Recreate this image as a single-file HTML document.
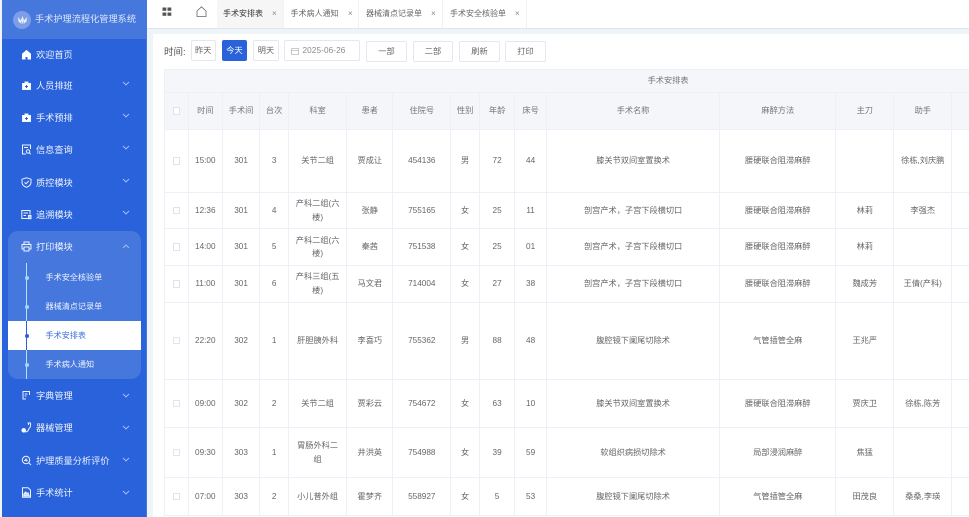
<!DOCTYPE html>
<html lang="zh"><head><meta charset="utf-8"><style>
*{box-sizing:border-box}
html,body{margin:0;padding:0;width:969px;height:517px;overflow:hidden;background:#eef5f9;font-family:"Liberation Sans","Noto Sans CJK SC",sans-serif}
body{filter:blur(.3px)}
.a{position:absolute}
#side{left:2px;top:0;width:145px;height:517px;background:#2962da;border-right:1px solid #4577dc}
#head{left:2px;top:0;width:144px;height:39px;background:#4577dc}
.logo{left:13px;top:11px;width:18px;height:18px;border-radius:50%;background:#7b9ee6}
.ttl{left:35px;top:13px;font-size:9.2px;line-height:13px;color:#dfe7f8;white-space:nowrap}
.grp{left:8px;top:231px;width:133px;height:148px;background:#4577dc;border-radius:10px}
.act{left:8px;top:321px;width:133px;height:29px;background:#fff}
.vl{left:26px;top:263px;width:1px;height:116px;background:#b8e0fa}
.dot{left:24.500px;width:4px;height:4px;border-radius:50%;background:#a8d4f5}
.m{left:36px;font-size:9.2px;line-height:14px;color:#eef3fc;white-space:nowrap}
.s{left:45.5px;font-size:8.1px;line-height:12px;color:#eef3fc;white-space:nowrap}
.ic{left:21px;width:11px;height:11px;fill:none;stroke:#eef3fc;stroke-width:1}
.ch{left:122px;width:8px;height:5px;fill:none;stroke:#a9c2f0;stroke-width:.9}
#tabs{left:147px;top:0;width:822px;height:29px;background:#fff;border-bottom:1px solid #dbe6ee}
.tab{top:0;height:28px;border-right:1px solid #f0f2f5;font-size:8px;line-height:28px;color:#666;white-space:nowrap}
.x{position:absolute;top:0;font-size:8px;color:#888}
#card{left:153px;top:34px;width:816px;height:483px;background:#fff}
.b{top:41px;height:21px;border:1px solid #e4e7ed;border-radius:2px;background:#fff;font-size:8.2px;line-height:19px;text-align:center;color:#666}
#tb{position:absolute;left:164px;top:69px;width:1007px;border-collapse:collapse;table-layout:fixed;font-size:8.2px;color:#666;text-align:center}
#tb td,#tb th{border:1px solid #edf0f6;padding:0 3px;font-weight:400;line-height:13.5px;overflow:hidden}
#tb th{background:#f4f6fa;color:#777}
i.c{display:inline-block;width:7.5px;height:7.5px;border:1px solid #e0e3e9;background:#fff;vertical-align:middle}
</style></head><body>
<div class="a" id="side"></div>
<div class="a" id="head"></div>
<div class="a logo"></div>
<svg class="a" style="left:17px;top:15px;width:11px;height:10px" viewBox="0 0 11 10" fill="#e8eefb"><path d="M5.500 1 7 5 5.500 9 4 5zM1 2 4 5.500 4.500 9 1.500 6.500zM10 2 7 5.500 6.500 9 9.500 6.500z"/></svg>
<div class="a ttl">手术护理流程化管理系统</div>

<div class="a grp"></div><div class="a act"></div><div class="a vl"></div>
<div class="a" style="left:26px;top:321px;width:1px;height:29px;background:#2962da"></div>
<div class="a dot" style="top:275.500px"></div><div class="a dot" style="top:304.500px"></div>
<div class="a dot" style="top:333.500px;background:#2962da"></div><div class="a dot" style="top:362.500px"></div>

<svg class="a ic" style="top:49px" viewBox="0 0 11 11"><path d="M1.500 5 5.500 1.500 9.500 5V10H7V7.500H4V10H1.500Z" fill="#fff" stroke="#fff"/></svg>
<svg class="a ic" style="top:80px" viewBox="0 0 11 11"><path d="M1.500 3.500H9.500V9.500H1.500ZM4 3.500V2H7V3.500" fill="#fff"/><path d="M5.500 5V8M4 6.500H7" stroke="#2962da"/></svg>
<svg class="a ic" style="top:112px" viewBox="0 0 11 11"><path d="M1.500 3.500H9.500V9.500H1.500ZM4 3.500V2H7V3.500" fill="#fff"/><path d="M5.500 5V8M4 6.500H7" stroke="#2962da"/></svg>
<svg class="a ic" style="top:144px" viewBox="0 0 11 11"><path d="M9.500 5V1H1.500V10H5M3 3.500H7"/><circle cx="7" cy="7.500" r="1.700"/><path d="M8.300 8.800 9.800 10.200"/></svg>
<svg class="a ic" style="top:177px" viewBox="0 0 11 11"><path d="M5.500 .8 10 2.200V5.500C10 8 7.500 9.700 5.500 10.300 3.500 9.700 1 8 1 5.500V2.200Z"/><path d="M3.500 5.300 5 6.800 7.700 4"/></svg>
<svg class="a ic" style="top:209px" viewBox="0 0 11 11"><path d="M7 9.500H.8V1.500H9V5.500M2.500 4H7M2.500 6.500H5"/><rect x="7.500" y="6.500" width="2.500" height="3.200" fill="#a9c2f0"/></svg>
<svg class="a ic" style="top:241px" viewBox="0 0 11 11"><path d="M3 3.500V1H8V3.500M3 8H1V3.500H10V8H8"/><rect x="3" y="6" width="5" height="4"/></svg>
<svg class="a ic" style="top:390px" viewBox="0 0 11 11"><path d="M8.500 5V1.500H2V9H5M3.700 4H6.500M3.700 6H5.500"/></svg>
<svg class="a ic" style="top:422px" viewBox="0 0 11 11"><path d="M6.500 1H9.500C10 4 9 6 8 6.500 7.500 9 5.500 10.500 3.500 9.500M7.500 1V3"/><circle cx="2.700" cy="8.300" r="1.800" fill="#fff"/></svg>
<svg class="a ic" style="top:455px" viewBox="0 0 11 11"><circle cx="5" cy="5" r="3.700"/><path d="M7.800 7.800 10 10M3 5.500H4.300L5 4 5.800 6 6.500 5"/></svg>
<svg class="a ic" style="top:487px" viewBox="0 0 11 11"><path d="M1.500 .8H7L9.500 3V10.300H1.500Z"/><path d="M2.800 9V7L4.500 5 6 6.500 7 5.800 8.300 9Z" fill="#cfdcf7"/></svg>

<div class="a m" style="top:48px">欢迎首页</div>
<div class="a m" style="top:79px">人员排班</div>
<div class="a m" style="top:111px">手术预排</div>
<div class="a m" style="top:143px">信息查询</div>
<div class="a m" style="top:176px">质控模块</div>
<div class="a m" style="top:208px">追溯模块</div>
<div class="a m" style="top:240px">打印模块</div>
<div class="a s" style="top:272px">手术安全核验单</div>
<div class="a s" style="top:301px">器械清点记录单</div>
<div class="a s" style="top:330px;color:#3f6fdc">手术安排表</div>
<div class="a s" style="top:359px">手术病人通知</div>
<div class="a m" style="top:389px">字典管理</div>
<div class="a m" style="top:421px">器械管理</div>
<div class="a m" style="top:454px">护理质量分析评价</div>
<div class="a m" style="top:486px">手术统计</div>

<svg class="a ch" style="top:81px" viewBox="0 0 8 5"><path d="M1 1 4 4 7 1"/></svg>
<svg class="a ch" style="top:113px" viewBox="0 0 8 5"><path d="M1 1 4 4 7 1"/></svg>
<svg class="a ch" style="top:145px" viewBox="0 0 8 5"><path d="M1 1 4 4 7 1"/></svg>
<svg class="a ch" style="top:178px" viewBox="0 0 8 5"><path d="M1 1 4 4 7 1"/></svg>
<svg class="a ch" style="top:210px" viewBox="0 0 8 5"><path d="M1 1 4 4 7 1"/></svg>
<svg class="a ch" style="top:244px" viewBox="0 0 8 5"><path d="M1 4 4 1 7 4"/></svg>
<svg class="a ch" style="top:393px" viewBox="0 0 8 5"><path d="M1 1 4 4 7 1"/></svg>
<svg class="a ch" style="top:425px" viewBox="0 0 8 5"><path d="M1 1 4 4 7 1"/></svg>
<svg class="a ch" style="top:457px" viewBox="0 0 8 5"><path d="M1 1 4 4 7 1"/></svg>
<svg class="a ch" style="top:490px" viewBox="0 0 8 5"><path d="M1 1 4 4 7 1"/></svg>

<div class="a" id="tabs"></div>
<svg class="a" style="left:162px;top:7px;width:10px;height:10px" viewBox="0 0 10 10" fill="#555"><rect x=".5" y=".5" width="3.800" height="3.300"/><rect x="5.500" y=".5" width="3.800" height="3.300"/><rect x=".5" y="5.500" width="3.800" height="3.300"/><rect x="5.500" y="5.500" width="3.800" height="3.300"/></svg>
<svg class="a" style="left:196px;top:6px;width:11px;height:11px" viewBox="0 0 11 11" fill="none" stroke="#666" stroke-width=".8"><path d="M1 5 5.500 .8 10 5V10.500H1Z"/></svg>
<div class="a tab" style="left:217px;width:67px;background:#f6f6f6;padding-left:6px;color:#333">手术安排表<span class="x" style="left:55px">×</span></div>
<div class="a tab" style="left:284px;width:75px;padding-left:6.500px">手术病人通知<span class="x" style="left:64px">×</span></div>
<div class="a tab" style="left:359px;width:84px;padding-left:7px">器械清点记录单<span class="x" style="left:72px">×</span></div>
<div class="a tab" style="left:443px;width:84px;padding-left:7px">手术安全核验单<span class="x" style="left:72px">×</span></div>

<div class="a" id="card"></div>
<div class="a" style="left:164px;top:46px;font-size:9.500px;line-height:13px;color:#555">时间:</div>
<div class="a b" style="left:190.500px;top:40px;width:25.500px">昨天</div>
<div class="a b" style="left:222px;top:40px;width:25px;background:#2962da;border-color:#2962da;color:#fff">今天</div>
<div class="a b" style="left:253px;top:40px;width:26px">明天</div>
<div class="a b" style="left:284px;top:40px;width:76px;text-align:left;padding-left:17.500px;color:#888;letter-spacing:.1px">2025-06-26</div>
<svg class="a" style="left:291px;top:47px;width:8px;height:8px" viewBox="0 0 8 8" fill="none" stroke="#bbb" stroke-width=".8"><path d="M.5 1.500H7.500V7.500H.5ZM.5 3.500H7.500"/></svg>
<div class="a b" style="left:366px;width:41px">一部</div>
<div class="a b" style="left:413px;width:40px">二部</div>
<div class="a b" style="left:459px;width:41px">刷新</div>
<div class="a b" style="left:505px;width:41px">打印</div>

<table id="tb">
<colgroup><col style="width:23.500px"><col style="width:34.600px"><col style="width:37px"><col style="width:29px"><col style="width:58px"><col style="width:46.400px"><col style="width:57.600px"><col style="width:29px"><col style="width:35px"><col style="width:32px"><col style="width:173px"><col style="width:116.400px"><col style="width:57.600px"><col style="width:58.400px"><col style="width:219.500px"></colgroup>
<tr style="height:23px"><th colspan="15">手术安排表</th></tr>
<tr style="height:37px"><th><i class="c"></i></th><th>时间</th><th>手术间</th><th>台次</th><th>科室</th><th>患者</th><th>住院号</th><th>性别</th><th>年龄</th><th>床号</th><th>手术名称</th><th>麻醉方法</th><th>主刀</th><th>助手</th><th></th></tr>
<tr style="height:63px"><td><i class="c"></i></td><td>15:00</td><td>301</td><td>3</td><td>关节二组</td><td>贾成让</td><td>454136</td><td>男</td><td>72</td><td>44</td><td>膝关节双间室置换术</td><td>腰硬联合阻滞麻醉</td><td></td><td>徐栋,刘庆鹏</td><td></td></tr>
<tr style="height:36px"><td><i class="c"></i></td><td>12:36</td><td>301</td><td>4</td><td>产科二组(六<br>楼)</td><td>张静</td><td>755165</td><td>女</td><td>25</td><td>11</td><td>剖宫产术，子宫下段横切口</td><td>腰硬联合阻滞麻醉</td><td>林莉</td><td>李强杰</td><td></td></tr>
<tr style="height:37px"><td><i class="c"></i></td><td>14:00</td><td>301</td><td>5</td><td>产科二组(六<br>楼)</td><td>秦茜</td><td>751538</td><td>女</td><td>25</td><td>01</td><td>剖宫产术，子宫下段横切口</td><td>腰硬联合阻滞麻醉</td><td>林莉</td><td></td><td></td></tr>
<tr style="height:36.500px"><td><i class="c"></i></td><td>11:00</td><td>301</td><td>6</td><td>产科三组(五<br>楼)</td><td>马文君</td><td>714004</td><td>女</td><td>27</td><td>38</td><td>剖宫产术，子宫下段横切口</td><td>腰硬联合阻滞麻醉</td><td>魏成芳</td><td>王倩(产科)</td><td></td></tr>
<tr style="height:77px"><td><i class="c"></i></td><td>22:20</td><td>302</td><td>1</td><td>肝胆胰外科</td><td>李喜巧</td><td>755362</td><td>男</td><td>88</td><td>48</td><td>腹腔镜下阑尾切除术</td><td>气管插管全麻</td><td>王兆严</td><td></td><td></td></tr>
<tr style="height:48.500px"><td><i class="c"></i></td><td>09:00</td><td>302</td><td>2</td><td>关节二组</td><td>贾彩云</td><td>754672</td><td>女</td><td>63</td><td>10</td><td>膝关节双间室置换术</td><td>腰硬联合阻滞麻醉</td><td>贾庆卫</td><td>徐栋,陈芳</td><td></td></tr>
<tr style="height:50px"><td><i class="c"></i></td><td>09:30</td><td>303</td><td>1</td><td>胃肠外科二<br>组</td><td>井洪英</td><td>754988</td><td>女</td><td>39</td><td>59</td><td>软组织病损切除术</td><td>局部浸润麻醉</td><td>焦猛</td><td></td><td></td></tr>
<tr style="height:37.500px"><td><i class="c"></i></td><td>07:00</td><td>303</td><td>2</td><td>小儿普外组</td><td>霍梦齐</td><td>558927</td><td>女</td><td>5</td><td>53</td><td>腹腔镜下阑尾切除术</td><td>气管插管全麻</td><td>田茂良</td><td>桑桑,李瑛</td><td></td></tr>
</table>
</body></html>
